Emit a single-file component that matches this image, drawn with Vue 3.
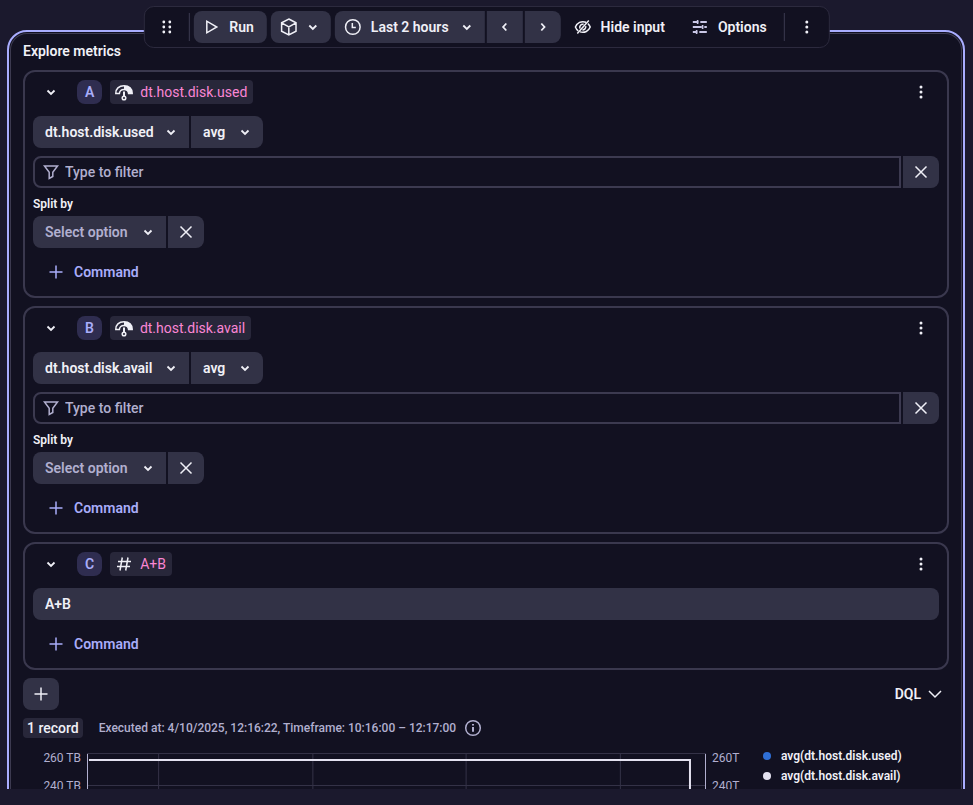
<template>
  <main class="page">
    <div class="toolbar" role="toolbar" aria-label="Section actions">
      <button class="btn ghost square" aria-label="Move">
        <svg width="16" height="16" viewBox="0 0 16 16" fill="currentColor">
          <circle v-for="d in dragDots" :key="d.join()" :cx="d[0]" :cy="d[1]" r="1.4" />
        </svg>
      </button>
      <span class="divider"></span>
      <button class="btn">
        <svg width="20" height="20" viewBox="0 0 20 20" class="line"><path d="M5 4.200v11.600L15 10z" /></svg>
        <span>Run</span>
      </button>
      <button class="btn" aria-label="Segments">
        <svg width="20" height="20" viewBox="0 0 20 20" class="line">
          <path d="M10 2l7.200 3.800v8.400L10 18l-7.200-3.800V5.800zM2.800 5.800L10 9.800l7.200-4M10 9.800V18" />
        </svg>
        <svg width="20" height="20" viewBox="0 0 20 20" class="line bold chev"><path d="M6.500 8.500l3.500 3.400 3.500-3.400" /></svg>
      </button>
      <div class="group">
        <button class="btn">
          <svg width="20" height="20" viewBox="0 0 20 20" class="line">
            <circle cx="10" cy="10" r="7.300" /><path d="M9.500 6v4.500H13" />
          </svg>
          <span>Last 2 hours</span>
          <svg width="20" height="20" viewBox="0 0 20 20" class="line bold"><path d="M6.500 8.500l3.500 3.400 3.500-3.400" /></svg>
        </button>
        <button class="btn square" aria-label="Previous timeframe">
          <svg width="20" height="20" viewBox="0 0 20 20" class="line bold"><path d="M11.500 6.500L8.300 10l3.200 3.500" /></svg>
        </button>
        <button class="btn square" aria-label="Next timeframe">
          <svg width="20" height="20" viewBox="0 0 20 20" class="line bold"><path d="M8.500 6.500l3.200 3.500-3.200 3.500" /></svg>
        </button>
      </div>
      <button class="btn ghost">
        <svg width="20" height="20" viewBox="0 0 20 20" class="line">
          <path d="M13.200 5.300C8.500 3.400 4.200 6 2.600 10c.6 1.600 1.600 2.900 2.800 3.800M7.300 14.900c4.500 1.500 8.600-1 10.100-4.900-.5-1.400-1.300-2.500-2.300-3.400M16 3.500L4.500 16.500M7.100 11.600c-.8-2.500 1.200-4.800 3.700-4.300M12.900 9.200c.3 2.200-1.200 3.700-3.300 3.700" />
        </svg>
        <span>Hide input</span>
      </button>
      <button class="btn ghost">
        <svg width="20" height="20" viewBox="0 0 20 20" class="line muted">
          <path d="M3 5h5.500M10.500 5H17M3 10h9M14.500 10H17M3 15h4.500M9.500 15H17" />
          <path d="M7.800 3v4M12.800 8v4M6.800 13v4" class="tick" />
        </svg>
        <span>Options</span>
      </button>
      <span class="divider"></span>
      <button class="btn ghost square" aria-label="More">
        <svg width="16" height="16" viewBox="0 0 16 16" fill="currentColor">
          <circle v-for="y in [3, 8, 13]" :key="y" cx="8" :cy="y" r="1.500" />
        </svg>
      </button>
    </div>

    <div class="scroll">
      <section class="panel">
        <h2>Explore metrics</h2>

        <article v-for="q in queries" :key="q.id" class="card">
          <header class="card-head">
            <button class="btn ghost square" :aria-label="'Collapse ' + q.id">
              <svg width="20" height="20" viewBox="0 0 20 20" class="line bold"><path d="M6.500 8.500l3.500 3.400 3.500-3.400" /></svg>
            </button>
            <span class="badge">{{ q.id }}</span>
            <span class="chip">
              <svg v-if="q.metric" width="20" height="20" viewBox="0 0 20 20" class="line">
                <path d="M1.800 11.500C1.500 6.800 5 3.800 10 3.800s8.500 3 8.200 7.700h-3.600C14.300 8.700 12.600 7.500 10 7.500s-4.300 1.200-4.600 4z" />
                <path d="M10 3.800c5 0 8.500 3 8.200 7.700h-3.600C14.300 8.700 12.600 7.500 10 7.500z" class="solid" />
                <path d="M10 9.500v4.500" class="thick" />
                <circle cx="10" cy="16" r="1.800" />
              </svg>
              <svg v-else width="20" height="20" viewBox="0 0 20 20" class="line">
                <path d="M8.300 3.500l-2.300 13M14 3.500l-2.300 13M4 7.500h13M3 12.500h13" />
              </svg>
              {{ q.metric || q.expression }}
            </span>
            <button class="btn ghost square end" :aria-label="'Actions for ' + q.id">
              <svg width="16" height="16" viewBox="0 0 16 16" fill="currentColor">
                <circle v-for="y in [3, 8, 13]" :key="y" cx="8" :cy="y" r="1.500" />
              </svg>
            </button>
          </header>

          <template v-if="q.metric">
            <div class="group">
              <div class="select metric">
                <select v-model="q.metric" aria-label="Metric">
                  <option>{{ q.metric }}</option>
                </select>
                <svg width="20" height="20" viewBox="0 0 20 20" class="line bold"><path d="M6.500 8.500l3.500 3.400 3.500-3.400" /></svg>
              </div>
              <div class="select agg">
                <select v-model="q.agg" aria-label="Aggregation">
                  <option>avg</option>
                </select>
                <svg width="20" height="20" viewBox="0 0 20 20" class="line bold"><path d="M6.500 8.500l3.500 3.400 3.500-3.400" /></svg>
              </div>
            </div>
            <div class="group">
              <label class="filter">
                <svg width="20" height="20" viewBox="0 0 20 20" class="line"><path d="M3.500 4h13l-4.700 6.200v4.300l-3.600 2V10.200z" /></svg>
                <input v-model="q.filter" type="text" placeholder="Type to filter" aria-label="Filter">
              </label>
              <button class="btn square" aria-label="Remove filter">
                <svg width="20" height="20" viewBox="0 0 20 20" class="line"><path d="M4.500 4.500l11 11M15.500 4.500l-11 11" /></svg>
              </button>
            </div>
            <div>
              <label class="split-label" :for="'split-' + q.id">Split by</label>
              <div class="group">
                <div class="select split">
                  <select :id="'split-' + q.id">
                    <option>Select option</option>
                  </select>
                  <svg width="20" height="20" viewBox="0 0 20 20" class="line bold"><path d="M6.500 8.500l3.500 3.400 3.500-3.400" /></svg>
                </div>
                <button class="btn square" aria-label="Remove split">
                  <svg width="20" height="20" viewBox="0 0 20 20" class="line"><path d="M4.500 4.500l11 11M15.500 4.500l-11 11" /></svg>
                </button>
              </div>
            </div>
          </template>
          <input v-else v-model="q.expression" class="expression" type="text" aria-label="Expression">

          <button class="btn ghost command">
            <svg width="20" height="20" viewBox="0 0 20 20" class="line"><path d="M10 3.500v13M3.500 10h13" /></svg>
            <span>Command</span>
          </button>
        </article>

        <div class="row">
          <button class="btn square" aria-label="Add query">
            <svg width="20" height="20" viewBox="0 0 20 20" class="line"><path d="M10 3.500v13M3.500 10h13" /></svg>
          </button>
          <button class="btn ghost dql">
            <span>DQL</span>
            <svg width="16" height="20" viewBox="0 0 16 20" class="line"><path d="M2 7l6 6 6-6" /></svg>
          </button>
        </div>

        <div class="status">
          <span class="records">1 record</span>
          <span class="executed">Executed at: 4/10/2025, 12:16:22, Timeframe: 10:16:00 – 12:17:00</span>
          <svg width="18" height="18" viewBox="0 0 18 18" class="line info">
            <circle cx="9" cy="9" r="7.300" /><path d="M9 8v4.800M9 5v1.600" class="thick" />
          </svg>
        </div>

        <div class="result">
          <div class="axis left"><span>260 TB</span><span>240 TB</span></div>
          <svg class="plot" viewBox="0 0 618 64" preserveAspectRatio="none">
            <path class="grid" d="M0 .5h618M0 32.500h618M71.500 0v64M225.500 0v64M378.500 0v64M532.500 0v64" />
            <path class="edge" d="M.5 1v63M617.500 1v63" />
            <path class="series" d="M2 7h600v57" />
          </svg>
          <div class="axis"><span>260T</span><span>240T</span></div>
          <ul class="legend">
            <li><i class="dot blue"></i>avg(dt.host.disk.used)</li>
            <li><i class="dot"></i>avg(dt.host.disk.avail)</li>
          </ul>
        </div>
      </section>
    </div>
  </main>
</template>

<script setup>
import { reactive } from 'vue';

const queries = reactive([
  { id: 'A', metric: 'dt.host.disk.used', agg: 'avg', filter: '' },
  { id: 'B', metric: 'dt.host.disk.avail', agg: 'avg', filter: '' },
  { id: 'C', expression: 'A+B' },
]);

const dragDots = [[5, 3], [11, 3], [5, 8], [11, 8], [5, 13], [11, 13]];
</script>

<style>
body {
  background: #1b192d;
}
</style>

<style scoped>
* {
  box-sizing: border-box;
}

.page {
  position: relative;
  display: flex;
  flex-direction: column;
  height: 100vh;
  padding: 30px 8px 16px 7px;
  overflow: hidden;
  background: #1b192d;
  color: #f0f0f7;
  font: 600 14px/20px Roboto, "Noto Sans", sans-serif;
}

button, input, select {
  font: inherit;
  color: inherit;
}

svg {
  display: block;
  flex: none;
}

.line {
  fill: none;
  stroke: currentColor;
  stroke-width: 1.5;
}

.bold {
  stroke-width: 1.8;
}

.thick {
  stroke-width: 2;
}

.muted {
  color: #c9c7e6;
  stroke-width: 2;
}

.tick {
  stroke-width: 1.6;
}

.solid {
  fill: currentColor;
  stroke: none;
}

.toolbar {
  position: absolute;
  top: 6px;
  left: 50%;
  transform: translateX(-50%);
  z-index: 1;
  display: flex;
  align-items: center;
  gap: 4px;
  padding: 4px;
  border: 1px solid #2c2a3e;
  border-radius: 10px;
  background: #121121;
  white-space: nowrap;
}

.divider {
  width: 1px;
  height: 28px;
  background: #3c3a50;
}

.btn {
  display: flex;
  align-items: center;
  justify-content: center;
  gap: 8px;
  height: 32px;
  padding: 0 13px 0 8px;
  border: 0;
  border-radius: 8px;
  background: #323246;
  cursor: pointer;
}

.btn > svg:last-child {
  margin-right: -5px;
}

.btn > .chev {
  margin-left: -4px;
}

.btn.square {
  flex: none;
  width: 36px;
  padding: 0;
}

.btn.square > svg {
  margin: 0;
}

.btn.ghost {
  background: none;
}

.group {
  display: flex;
  gap: 2px;
}

.group > * {
  border-radius: 0;
}

.group > :first-child {
  border-radius: 8px 0 0 8px;
}

.group > :last-child {
  border-radius: 0 8px 8px 0;
}

.scroll {
  flex: 1;
  min-height: 0;
  overflow: hidden;
}

.panel {
  display: flex;
  flex-direction: column;
  gap: 8px;
  padding: 9px 14px 16px;
  border: 2px solid #a9adff;
  border-radius: 20px;
  background: #121121;
  box-shadow: inset 0 0 0 1px #121121, inset 0 0 0 2px #3c3a50;
}

h2 {
  margin: 0;
  padding-bottom: 1px;
  font: inherit;
}

.card {
  display: flex;
  flex-direction: column;
  gap: 8px;
  padding: 4px 8px 8px;
  border: 2px solid #3a384e;
  border-radius: 12px;
}

.card-head {
  display: flex;
  align-items: center;
  gap: 8px;
}

.badge {
  padding: 2px 8px;
  border-radius: 8px;
  background: #2f2d50;
  color: #a9adfa;
}

.chip {
  display: flex;
  align-items: center;
  gap: 6px;
  height: 24px;
  padding: 0 6px 0 4px;
  border-radius: 4px;
  background: #28273a;
  color: #fa86d4;
  font-weight: 400;
}

.chip svg {
  color: #f0f0f7;
}

.end {
  margin-left: auto;
}

.select {
  position: relative;
  overflow: hidden;
  background: #323246;
}

.select select {
  width: 100%;
  height: 32px;
  padding: 0 28px 0 12px;
  border: 0;
  background: none;
  appearance: none;
}

.select svg {
  position: absolute;
  top: 6px;
  right: 8px;
  pointer-events: none;
}

.metric {
  width: 156px;
}

.agg {
  width: 72px;
}

.split {
  width: 133px;
}

.split select {
  color: #b1afcf;
}

.filter {
  flex: 1;
  display: flex;
  align-items: center;
  gap: 4px;
  height: 32px;
  padding: 0 6px;
  border: 2px solid #3c3a50;
  color: #b1afcf;
  font-weight: 500;
}

.filter input {
  flex: 1;
  min-width: 0;
  padding: 0;
  border: 0;
  outline: 0;
  background: none;
}

.filter input::placeholder {
  color: #b1afcf;
}

.split-label {
  display: block;
  margin-bottom: 4px;
  font-size: 12px;
  line-height: 16px;
}

.expression {
  height: 32px;
  padding: 0 12px;
  border: 0;
  border-radius: 8px;
  background: #323246;
}

.command {
  align-self: flex-start;
  padding-left: 13px;
  color: #a9adfa;
}

.row {
  display: flex;
  justify-content: space-between;
}

.dql {
  gap: 6px;
  padding: 0 11px;
}

.status {
  display: flex;
  align-items: center;
  font-weight: 500;
}

.records {
  padding: 0 4px;
  border-radius: 4px;
  background: #28273a;
}

.executed {
  margin-left: 16px;
  color: #b1afcf;
  font-size: 12px;
}

.info {
  margin-left: 8px;
  color: #b1afcf;
}

.result {
  display: flex;
  padding-top: 7px;
  font-size: 12px;
}

.axis {
  display: flex;
  flex-direction: column;
  gap: 8px;
  width: 57px;
  padding-left: 6px;
  margin-top: -5px;
  color: #b1afcf;
  font-weight: 400;
}

.axis.left {
  width: 64px;
  padding-right: 6px;
  text-align: right;
}

.plot {
  flex: 1;
  min-width: 0;
  height: 64px;
  fill: none;
}

.grid {
  stroke: #343247;
}

.edge {
  stroke: #b1afcf;
}

.series {
  stroke: #e4e2f0;
  stroke-width: 2;
}

.legend {
  width: 186px;
  margin: -7px 0 0;
  padding: 0;
  list-style: none;
}

.legend li {
  display: flex;
  align-items: center;
  gap: 10px;
}

.dot {
  width: 8px;
  height: 8px;
  border-radius: 50%;
  background: #e4e2f0;
}

.blue {
  background: #2f6fd6;
}
</style>
